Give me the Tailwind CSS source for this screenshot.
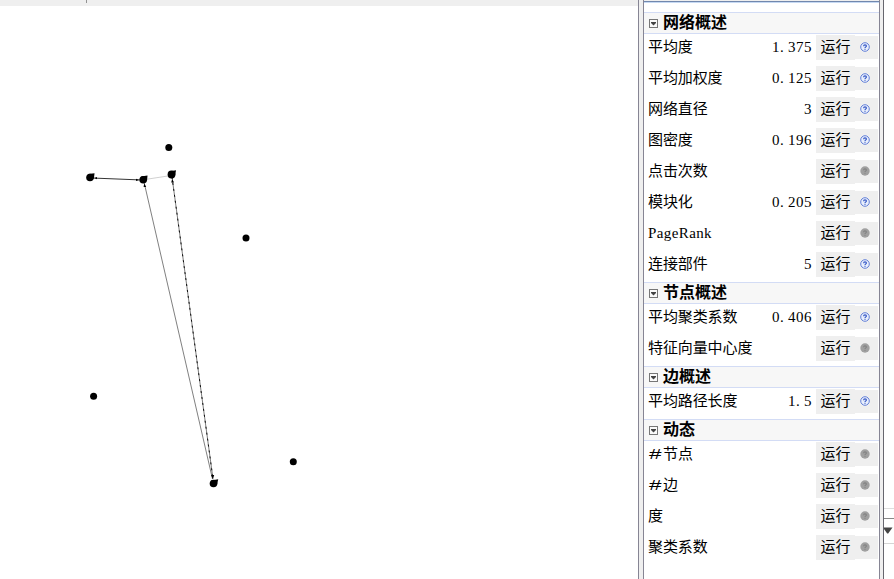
<!DOCTYPE html>
<html lang="zh-CN">
<head>
<meta charset="utf-8">
<title>统计</title>
<script src="https://cdn.jsdelivr.net/npm/@tailwindcss/browser@4"></script>
</head>
<body class="w-[894px] h-[579px] overflow-hidden bg-white text-black font-['Liberation_Sans','Noto_Sans_CJK_SC',sans-serif]">
<div class="flex w-[894px] h-[579px]">
  <main class="flex flex-col w-[638px] shrink-0">
    <div class="h-[6px] bg-[#efefef] flex"><div class="ml-[86px] w-px h-[3px] bg-[#929292]"></div></div>
    <svg class="block w-[638px] h-[573px]" viewBox="0 6 638 573">
      <g fill="none" stroke="#000" stroke-width="1">
        <path d="M92 178L142 180" stroke-width=".8"/>
        <path d="M145 179.500L171 175.500" stroke="#bdbdbd" stroke-width=".7"/>
        <path d="M144 182L212.500 479" stroke="#555" stroke-width=".75"/>
        <path d="M172 177L213 479" stroke="#444" stroke-width=".7"/>
        <path d="M172 177L213 479" stroke-dasharray="2 4" stroke-width=".9"/>
      </g>
      <g>
        <circle cx="168.800" cy="147.500" r="3.500"/><circle cx="246" cy="238" r="3.500"/>
        <circle cx="93.600" cy="396.300" r="3.500"/><circle cx="293.300" cy="461.800" r="3.500"/>
        <circle cx="90" cy="177.500" r="3.800"/><path d="M88 174L94.500 173.200L93.800 179Z"/>
        <circle cx="143.200" cy="179.700" r="3.800"/><path d="M141 176.500L147.500 175.500L147 181Z"/>
        <circle cx="171.500" cy="174.500" r="3.900"/><path d="M169 171.500L176 170.300L175 176Z"/>
        <circle cx="213.500" cy="483.500" r="3.800"/><path d="M211 480.500L218.200 479.300L217 485Z"/>
        <path d="M94.500 178L97 177v2.300ZM139 180L136 178.800v2.300ZM144.200 183.500L143.600 187h2.600ZM172.200 179L171.200 182.500h2.800ZM212.800 479L211 475h3.200Z"/>
      </g>
    </svg>
  </main>
  <div class="w-[6px] shrink-0 bg-[#efefef] border-x border-[#868594]"></div>
  <aside class="w-[235px] shrink-0 flex flex-col">
    <div class="h-[12px] shrink-0 flex flex-col"><div class="h-px bg-[#efefef]"></div><div class="h-px bg-[#7187ad]"></div><div class="h-px bg-[#c6d9f3]"></div></div>
    <div id="stats"></div>
  </aside>
  <div class="w-[5px] shrink-0 bg-[#efefef] border-x border-l-[#868594] border-r-[#66666e]"></div>
  <div class="w-[10px] shrink-0 flex flex-col">
    <div class="h-[508px] shrink-0"></div>
    <div class="h-[10px] border-t border-[#dedede]"></div>
    <div class="h-[26px] border-t border-b border-t-[#888] border-b-[#d5d5d5]">
      <svg class="block w-[10px] h-[24px]" viewBox="0 0 10 24"><path d="M0 8.500H8.500L4.200 14.500H3.200L0 10Z" fill="#444"/></svg>
    </div>
  </div>
</div>
<script>
const groups = [
  ['网络概述', [['平均度','1.375',1],['平均加权度','0.125',1],['网络直径','3',1],['图密度','0.196',1],['点击次数','',0],['模块化','0.205',1],['PageRank','',0],['连接部件','5',1]]],
  ['节点概述', [['平均聚类系数','0.406',1],['特征向量中心度','',0]]],
  ['边概述', [['平均路径长度','1.5',1]]],
  ['动态', [['#节点','',0],['#边','',0],['度','',0],['聚类系数','',0]]]
];
const q = '<path d="M3.600 4.200Q3.700 2.900 5 2.900Q6.400 2.900 6.400 4.100Q6.400 4.700 5.700 5.100Q5 5.500 5 6.100M5 6.800V7.800" fill="none" ';
const help = on => on
  ? '<svg class="w-[10px] h-[10px]" viewBox="0 0 10 10"><circle cx="5" cy="5" r="4.300" fill="#e9effc" stroke="#6480d8" stroke-width="1"/>' + q + 'stroke="#3457c5" stroke-width="1.200"/></svg>'
  : '<svg class="w-[10px] h-[10px]" viewBox="0 0 10 10"><circle cx="5" cy="5" r="4.700" fill="#a0a0a0"/>' + q + 'stroke="#828282" stroke-width="1.100"/></svg>';
const label = t => t === 'PageRank'
  ? `<span class="pt-px font-['Liberation_Serif',serif] text-[15px] tracking-[0.4px]">PageRank</span>`
  : t.replace('#', '<span class="inline-block w-[15px] text-center"><span class="inline-block scale-x-150 text-[15px]">#</span></span>');
const num = v => v.replace('.', '<span class="inline-block w-[8px]">.</span>');
document.getElementById('stats').innerHTML = groups.map(([title, rows]) => `
<section class="pb-[4px]">
  <h2 class="h-[22px] mb-px border-y border-[#d3dcf5] bg-[#f7f7f7] flex items-center pl-[5px]">
    <svg class="w-[9px] h-[9px] mr-[6px]" viewBox="0 0 9 9"><rect x=".5" y=".5" width="8" height="8" fill="#fafafa" stroke="#777"/><path d="M2 3H7V4L4.500 6.500L2 4Z" fill="#444"/></svg>
    <span class="-ml-px text-[16px] leading-[20px] font-bold whitespace-nowrap">${title}</span>
  </h2>
  <div class="flex flex-col gap-[6px]">${rows.map(([t, v, on]) => `
    <div class="h-[25px] flex items-center pr-px">
      <span class="pl-[4px] text-[15px] leading-[23px] pb-[2px] tracking-[-0.1px] whitespace-nowrap flex items-center">${label(t)}</span>
      <span class="ml-auto pr-[4px] font-['Liberation_Serif',serif] text-[15px] leading-[25px] tracking-[0.5px]">${num(v)}</span>
      <button class="w-[39px] h-[25px] bg-[#efefef] text-[15px] leading-[23px] pb-[2px] tracking-[-0.1px]">运行</button>
      <span class="w-[23px] h-[23px] bg-[#efefef] flex items-center justify-center pr-[3px] pb-px">${help(on)}</span>
    </div>`).join('')}
  </div>
</section>`).join('<div class="h-px"></div>');
</script>
</body>
</html>
